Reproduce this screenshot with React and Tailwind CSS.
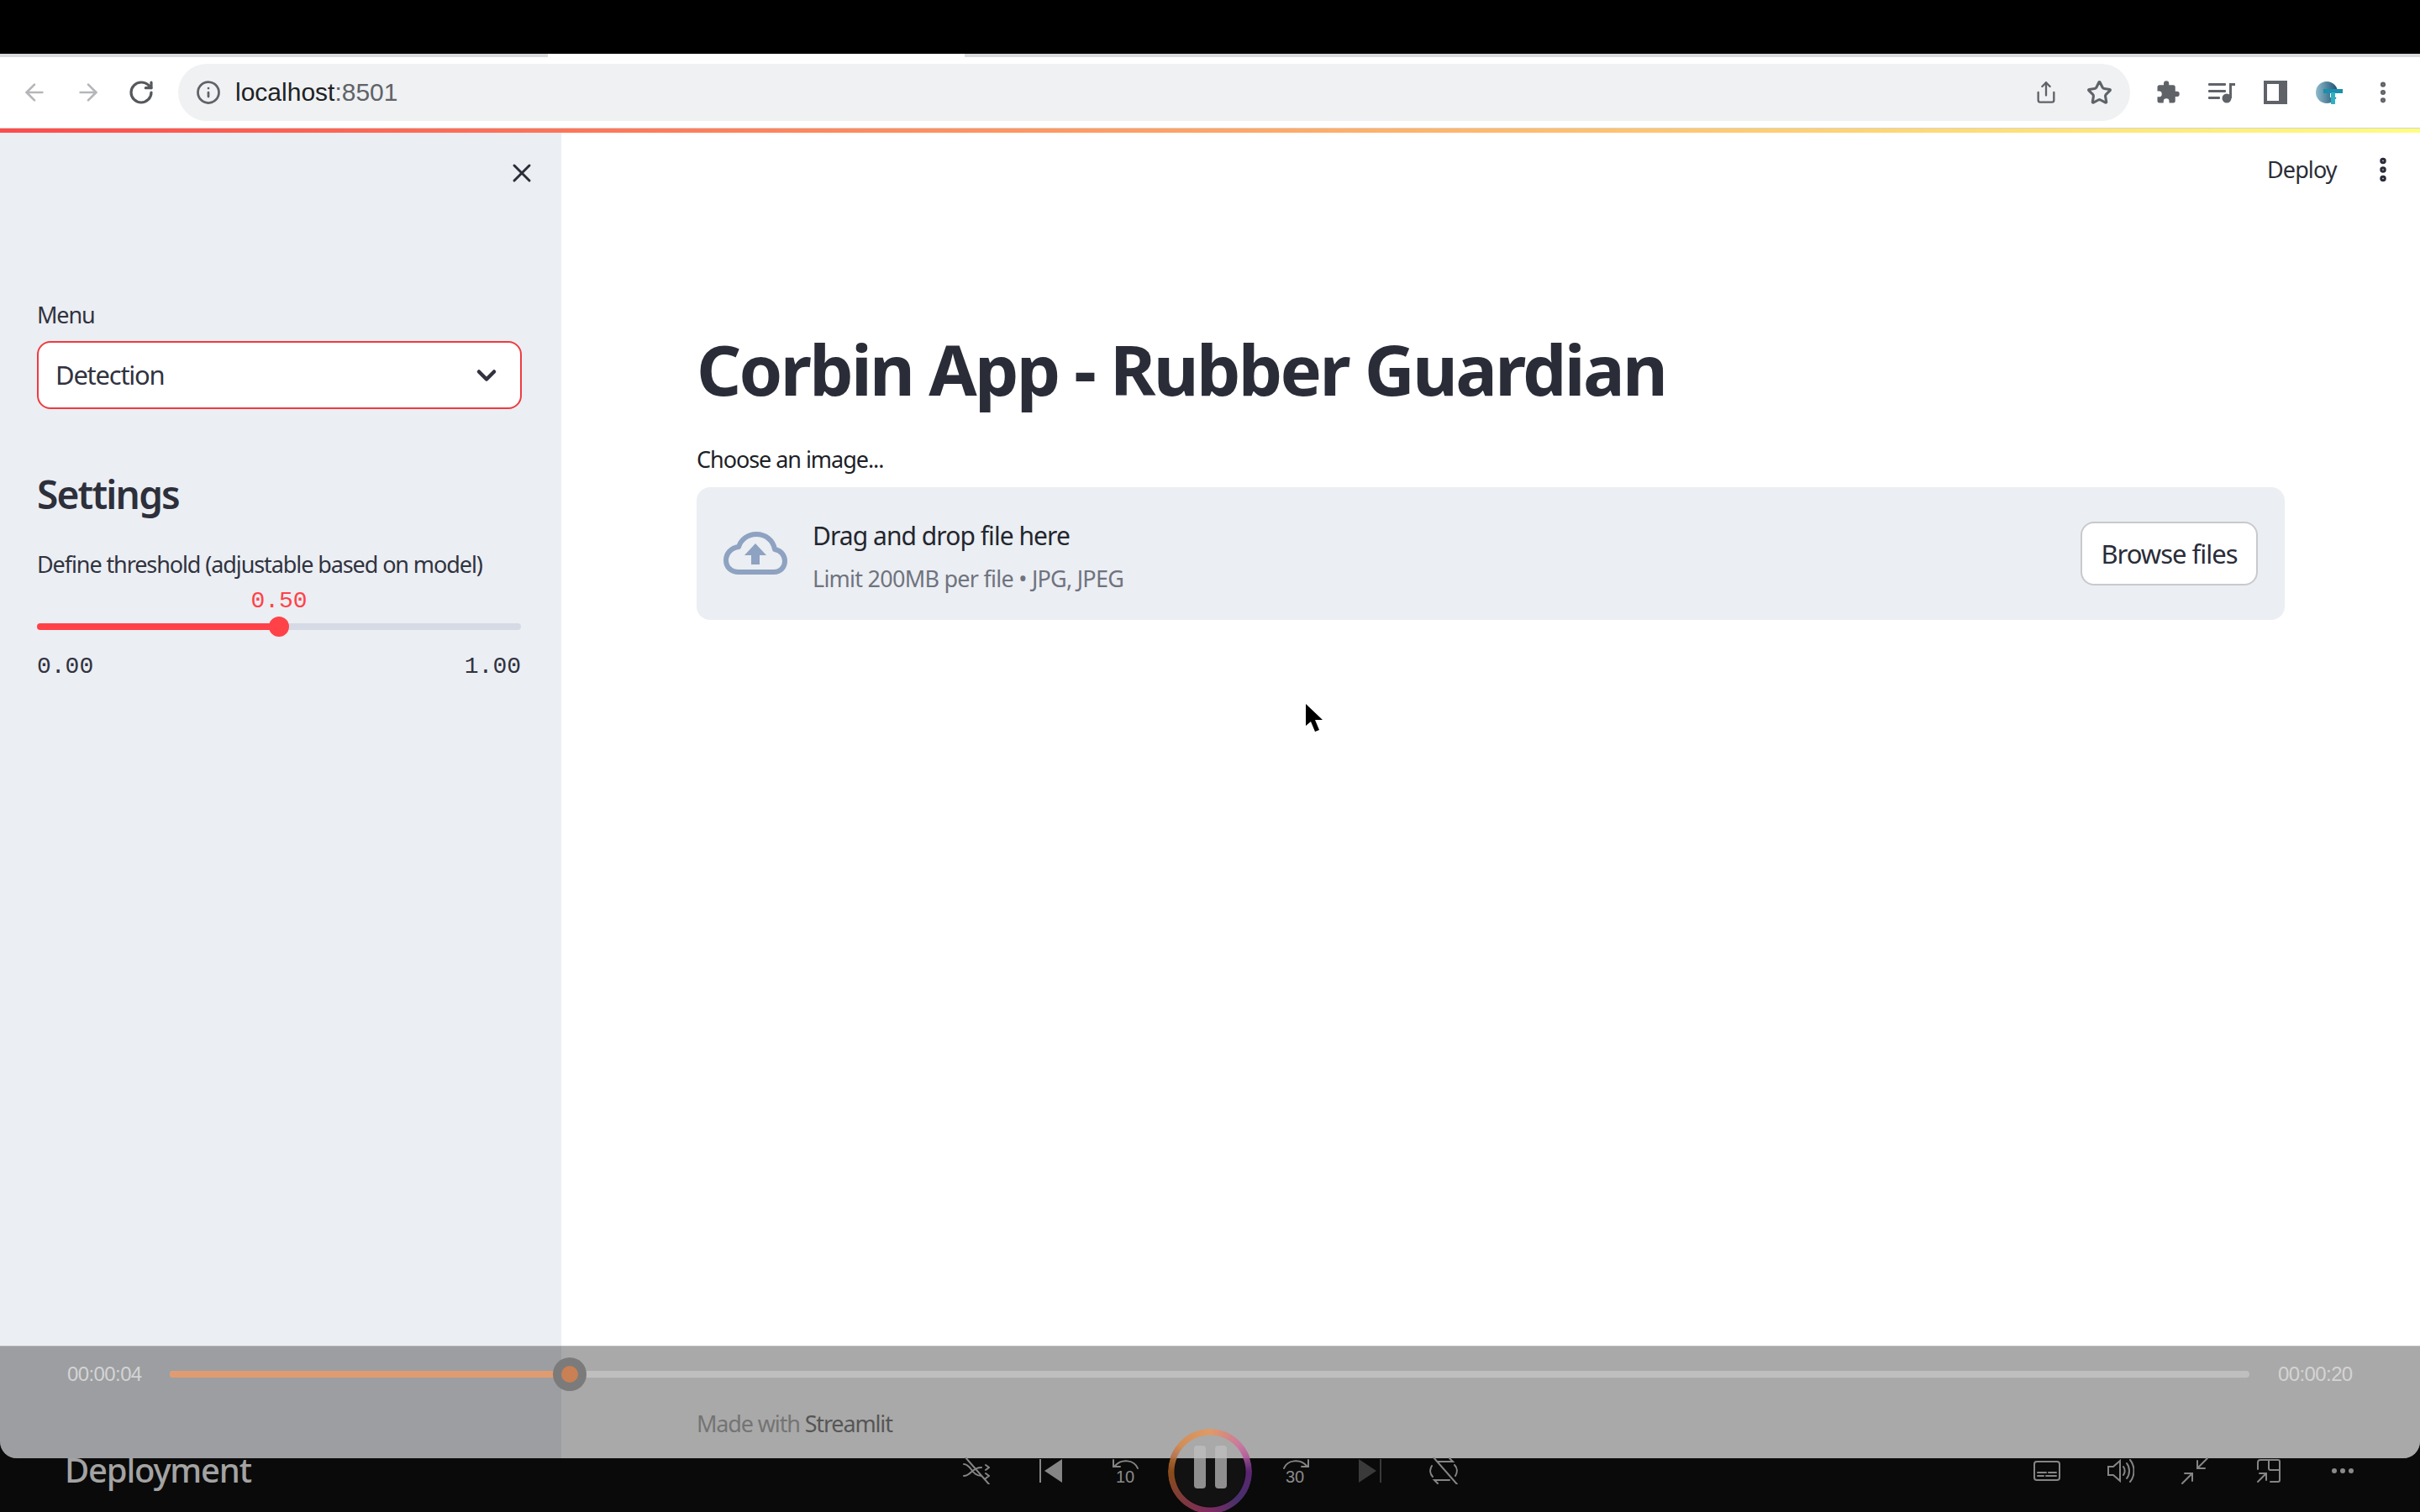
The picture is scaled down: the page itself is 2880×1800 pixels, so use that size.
import React from 'react';
import { ChevronDown, X, ArrowLeft, ArrowRight, RotateCw, Info, Star, Share, EllipsisVertical } from 'lucide-react';

const sans = 'font-["Noto_Sans",sans-serif]';

const Cloud = () => (
  <svg className="w-[76px] h-[52px] shrink-0" viewBox="0 0 76 52" fill="none">
    <path d="M18 48h42c8 0 13-6 13-13s-5-13-12-14C59 10 50 3 39 3 29 3 21 9 18 18 9 19 3 26 3 34c0 8 6 14 15 14z" stroke="#8ea2c1" strokeWidth="6" strokeLinejoin="round" />
    <path d="M38 14l13 14h-8v11H33V28h-8z" fill="#8ea2c1" />
  </svg>
);

const Ring = ({ className }) => (
  <div className={`w-[100px] h-[100px] rounded-full [mask-image:radial-gradient(closest-side,transparent_84%,black_86%)] ${className}`} />
);

const Pause = ({ tone }) => (
  <div className="flex gap-[11px]">
    <div className={`w-[14px] h-[39px] rounded-[4px] ${tone}`} />
    <div className={`w-[14px] h-[39px] rounded-[4px] ${tone}`} />
  </div>
);

function Toolbar() {
  return (
    <div className="flex items-center h-[84px] bg-white pl-[25px] text-[#5f6368]">
      <ArrowLeft size={32} strokeWidth={2} className="text-[#b4b6b9]" />
      <ArrowRight size={32} strokeWidth={2} className="ml-[32px] text-[#b4b6b9]" />
      <RotateCw size={32} strokeWidth={2.4} className="ml-[31px] text-[#55585c]" />
      <div className="ml-[28px] flex items-center w-[2323px] h-[68px] rounded-full bg-[#eff1f3] pl-[21px] pr-[21px]">
        <Info size={30} strokeWidth={2.2} />
        <span className="ml-[17px] font-['Liberation_Sans',sans-serif] text-[30px] leading-none text-[#202124]">
          localhost<span className="text-[#5f6368]">:8501</span>
        </span>
        <Share size={28} strokeWidth={2} className="ml-auto" />
        <Star size={31} strokeWidth={2.4} className="ml-[34px]" />
      </div>
      {/* extensions */}
      <svg className="ml-[30px] w-[30px] h-[30px]" viewBox="0 0 24 24" fill="#5f6368">
        <path d="M20.5 11H19V7a2 2 0 0 0-2-2h-4V3.5a2.5 2.5 0 0 0-5 0V5H4a2 2 0 0 0-2 2v3.8h1.5a2.7 2.7 0 0 1 0 5.4H2V20a2 2 0 0 0 2 2h3.8v-1.5a2.7 2.7 0 0 1 5.4 0V22H17a2 2 0 0 0 2-2v-4h1.5a2.5 2.5 0 0 0 0-5z" />
      </svg>
      <svg className="ml-[32px] w-[34px] h-[26px]" viewBox="0 0 34 26" fill="#5f6368">
        <rect x="1" y="2" width="21" height="3" rx="1" />
        <rect x="1" y="10" width="21" height="3" rx="1" />
        <rect x="1" y="18" width="14" height="3" rx="1" />
        <circle cx="23" cy="20" r="5.5" />
        <path d="M26 20V2h7v3h-4v15z" />
      </svg>
      <svg className="ml-[33px] w-[28px] h-[28px]" viewBox="0 0 28 28" fill="#5f6368">
        <path d="M0 0h28v28H0zM4 4v20h14V4z" fillRule="evenodd" />
      </svg>
      <svg className="ml-[34px] w-[32px] h-[28px]" viewBox="0 0 32 28">
        <defs>
          <linearGradient id="prof" x1="0" x2="1">
            <stop offset="0" stopColor="#8fbccb" />
            <stop offset="1" stopColor="#1d4f72" />
          </linearGradient>
        </defs>
        <circle cx="13" cy="14" r="13" fill="url(#prof)" />
        <rect x="17" y="15" width="15" height="5" fill="#fff" />
        <rect x="9" y="10" width="23" height="5" fill="#1a8fae" />
        <rect x="18" y="14" width="5" height="14" fill="#2fb0c2" />
      </svg>
      <EllipsisVertical size={32} strokeWidth={2.6} className="ml-[32px] text-[#5f6368]" />
    </div>
  );
}

function Sidebar() {
  return (
    <aside className="w-[668px] shrink-0 h-full bg-[#ebeef3] pl-[44px] relative">
      <X size={36} strokeWidth={2} className="absolute left-[603px] top-[30px] text-[#2a2d38]" />
      <div className="pt-[197px] text-[27px] leading-[40px] tracking-[-1.15px] text-[#31333f]">Menu</div>
      <div className="mt-[11px] flex items-center justify-between w-[577px] h-[81px] rounded-[16px] border-2 border-[#ee3b3f] bg-white pl-[20px] pr-[22px] text-[31px] tracking-[-1.25px] text-[#31333f]">
        Detection
        <ChevronDown size={36} strokeWidth={3} className="text-[#31333f]" />
      </div>
      <h2 className="mt-[71px] text-[46px] leading-[60px] font-semibold tracking-[-1.8px] text-[#2d303b]">Settings</h2>
      <div className="mt-[34px] text-[27px] leading-[40px] tracking-[-1.1px] whitespace-nowrap text-[#31333f]">Define threshold (adjustable based on model)</div>
      <div className="w-[576px]">
        <div className="mt-[8px] relative h-[78px]">
          <div className="text-center font-['Liberation_Mono',monospace] text-[28px] leading-[32px] text-[#ff4248]">0.50</div>
          <div className="mt-[10px] flex h-[8px] rounded-full bg-[#d5dae5] overflow-hidden">
            <div className="w-[288px] bg-[#ff4248]" />
          </div>
          <div className="absolute left-[276px] top-[34px] w-[24px] h-[24px] rounded-full bg-[#ff4248]" />
        </div>
        <div className="flex justify-between font-['Liberation_Mono',monospace] text-[28px] leading-[32px] text-[#31333f]">
          <span>0.00</span>
          <span>1.00</span>
        </div>
      </div>
    </aside>
  );
}

function Main() {
  return (
    <main className="flex-1 h-full bg-white relative">
      <div className="absolute left-[2030px] top-[24px] text-[27px] leading-[40px] tracking-[-0.9px] text-[#2a2d38]">Deploy</div>
      <EllipsisVertical size={36} strokeWidth={3} className="absolute left-[2150px] top-[26px] text-[#2a2d38]" />
      <div className="pl-[161px] pr-[161px]">
        <h1 className="pt-[221px] text-[83px] leading-[120px] font-bold tracking-[-2.7px] whitespace-nowrap text-[#2a2d38]">Corbin App - Rubber Guardian</h1>
        <div className="mt-[28px] text-[27px] leading-[40px] tracking-[-1.05px] text-[#1d1f27]">Choose an image...</div>
        <div className="mt-[13px] flex items-center h-[158px] rounded-[16px] bg-[#ebeef2] pl-[32px] pr-[32px]">
          <Cloud />
          <div className="ml-[30px] pt-[4px]">
            <div className="text-[30px] leading-[44px] tracking-[-0.95px] text-[#24262f]">Drag and drop file here</div>
            <div className="mt-[11px] text-[27px] leading-[36px] tracking-[-0.75px] text-[#6f7380]">Limit 200MB per file • JPG, JPEG</div>
          </div>
          <button className="ml-auto w-[211px] h-[76px] rounded-[16px] border-2 border-[#c8c9cc] bg-white text-[31px] tracking-[-1px] text-[#2a2d38]">Browse files</button>
        </div>
      </div>
      <svg className="absolute left-[885px] top-[680px] w-[22px] h-[34px]" viewBox="0 0 22 34">
        <path d="M1 0v26l6-5 5 12 5-2-5-12h9z" fill="#000" stroke="#fff" strokeWidth="2" paintOrder="stroke" />
      </svg>
    </main>
  );
}

function PlayerOverlay() {
  return (
    <div className="absolute inset-x-0 bottom-0 h-[134px] bg-black/[0.337] border-t border-[#d9d9d9]/40 overflow-hidden">
      <div className="flex items-center h-[66px] pl-[80px] font-['Liberation_Sans',sans-serif] text-[24px] text-[#d4d4d4]">
        <span className="w-[90px] tracking-[-0.6px]">00:00:04</span>
        <div className="ml-[32px] w-[2475px] h-[8px] rounded-full bg-[#bfbfbf] relative">
          <div className="w-[476px] h-full rounded-full bg-[#e09c70]" />
          <div className="absolute left-[456px] top-[-16px] w-[40px] h-[40px] rounded-full bg-[#7b7b7b] flex items-center justify-center">
            <div className="w-[20px] h-[20px] rounded-full bg-[#c98055]" />
          </div>
        </div>
        <span className="ml-[34px] tracking-[-0.6px]">00:00:20</span>
      </div>
      <div className="pl-[829px] mt-[6px] text-[27px] leading-[40px] tracking-[-1.15px] text-[#747474]">
        Made with <span className="text-[#565656]">Streamlit</span>
      </div>
      {/* top half of the pause button lies over the window */}
      <div className="absolute left-[1390px] top-[98px] w-[100px] h-[100px] flex items-center justify-center">
        <Ring className="absolute inset-0 bg-[conic-gradient(#e09a66_0deg,#c878a0_50deg,#9a4a90_90deg,#6a3a80_180deg,#9a5a50_270deg,#d08e58_310deg,#e09a66_360deg)]" />
        <div className="mt-[-21px]"><Pause tone="bg-[#b9b9b9]" /></div>
      </div>
    </div>
  );
}

function BottomBar() {
  const stroke = { stroke: '#858585', strokeWidth: 2, fill: 'none', strokeLinecap: 'round' };
  return (
    <div className="relative h-[64px] bg-[#0a0a0a] flex items-start">
      <div className="ml-[77px] mt-[-11px] w-[231px] text-[40px] leading-[50px] font-medium tracking-[-1.2px] text-[#a3a3a3]">Deployment</div>

      {/* shuffle */}
      <svg className="ml-[838px] w-[32px] h-[32px] mt-[-1px]" viewBox="0 0 32 32" {...stroke}>
        <path d="M1 22c9 0 9-10 21-10M1 8c9 0 9 14 21 14M27 9l4 3-4 3M27 19l4 3-4 3M3 0l28 32" />
      </svg>
      {/* previous */}
      <svg className="ml-[59px] w-[28px] h-[28px] mt-[1px]" viewBox="0 0 28 28">
        <rect width="2" height="28" fill="#858585" />
        <path d="M27 0v28L6 14z" fill="#858585" />
      </svg>
      {/* back 10 */}
      <div className="ml-[58px] w-[32px] mt-[1px] relative">
        <svg className="w-[32px] h-[12px]" viewBox="0 0 32 12" {...stroke}>
          <path d="M31 11C27 1 12-1 4 8M2 1v8h8" />
        </svg>
        <div className="text-center font-['Liberation_Sans',sans-serif] text-[20px] leading-[18px] text-[#8a8a8a]">10</div>
      </div>
      {/* pause button, lower half */}
      <div className="absolute left-[1390px] top-0 w-[100px] h-[64px] overflow-hidden">
        <div className="absolute left-0 top-[-34px] w-[100px] h-[100px] flex items-center justify-center">
          <div className="absolute inset-[8px] rounded-full bg-[#121212]" />
          <Ring className="absolute inset-0 bg-[conic-gradient(#e09a66_0deg,#c070a0_50deg,#5b2570_90deg,#47306c_135deg,#7d2b60_180deg,#7e3a3a_225deg,#8a4c1a_270deg,#c9864f_315deg,#e09a66_360deg)]" />
          <div className="relative mt-[1px]"><Pause tone="bg-[#8f8f8f]" /></div>
        </div>
      </div>
      {/* forward 30 */}
      <div className="ml-[172px] w-[28px] mt-[1px] relative">
        <svg className="w-[32px] h-[12px]" viewBox="0 0 32 12" {...stroke}>
          <path d="M1 11C5 1 20-1 28 8M30 1v8h-8" />
        </svg>
        <div className="text-center font-['Liberation_Sans',sans-serif] text-[20px] leading-[18px] text-[#8a8a8a]">30</div>
      </div>
      {/* next */}
      <svg className="ml-[61px] w-[28px] h-[28px] mt-[1px]" viewBox="0 0 28 28">
        <rect x="26" width="2" height="28" fill="#3a3a3a" />
        <path d="M1 0v28L22 14z" fill="#3a3a3a" />
      </svg>
      {/* repeat */}
      <svg className="ml-[57px] w-[34px] h-[32px] mt-[-1px]" viewBox="0 0 34 32" {...stroke}>
        <path d="M5 0l28 32M10 5h18l-4-4M24 27H6l4 4M3 10c-3 5-2 10 1 13M31 22c3-5 2-10-1-13" />
      </svg>

      {/* captions */}
      <svg className="ml-[685px] mt-[3px] w-[32px] h-[24px]" viewBox="0 0 32 24" {...stroke}>
        <rect x="1" y="1" width="30" height="22" rx="3" />
        <path d="M5 14h10M18 14h9M5 18h7M15 18h12" />
      </svg>
      {/* volume */}
      <svg className="ml-[56px] mt-[1px] w-[32px] h-[28px]" viewBox="0 0 32 28" {...stroke}>
        <path d="M1 9h6l8-7v24l-8-7H1zM19 9c2 3 2 7 0 10M23 5c4 5 4 13 0 18M27 1c6 7 6 19 0 26" />
      </svg>
      {/* collapse */}
      <svg className="ml-[56px] mt-[-1px] w-[32px] h-[32px]" viewBox="0 0 32 32" {...stroke}>
        <path d="M31 1L19 13M19 4v9h9M1 31l12-12M4 19h9v9" />
      </svg>
      {/* picture in picture */}
      <svg className="ml-[58px] mt-[1px] w-[28px] h-[28px]" viewBox="0 0 28 28" {...stroke}>
        <path d="M1 12V4a3 3 0 0 1 3-3h21a2 2 0 0 1 2 2v22a2 2 0 0 1-2 2h-9M14 1v10a2 2 0 0 0 2 2h11M1 27l10-10M3 17h8v8" />
      </svg>
      {/* more */}
      <svg className="ml-[61px] mt-[11px] w-[26px] h-[8px]" viewBox="0 0 26 8" fill="#8a8a8a">
        <circle cx="3" cy="4" r="3" />
        <circle cx="13" cy="4" r="3" />
        <circle cx="23" cy="4" r="3" />
      </svg>
    </div>
  );
}

export default function App() {
  return (
    <div className={`w-[2880px] h-[1800px] overflow-hidden bg-[#0a0a0a] flex flex-col ${sans}`}>
      <div className="h-[64px] bg-black" />
      <div className="h-[4px] flex bg-[#d8dade]">
        <div className="ml-[652px] w-[496px] bg-white" />
      </div>
      <Toolbar />
      <div className="h-[6px] border-t border-[#d0d4da] bg-[linear-gradient(90deg,#ff4b4b,#fffd80)]" />
      <div className="relative h-[1578px] flex rounded-b-[20px] overflow-hidden">
        <Sidebar />
        <Main />
        <PlayerOverlay />
      </div>
      <BottomBar />
    </div>
  );
}
